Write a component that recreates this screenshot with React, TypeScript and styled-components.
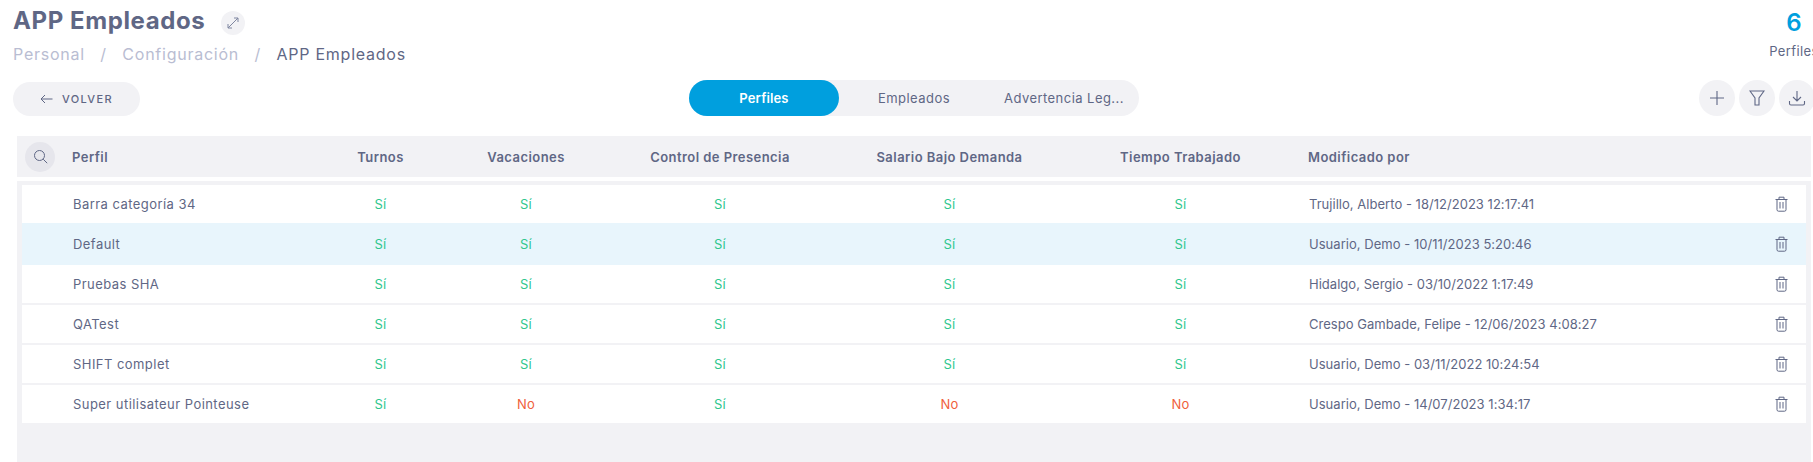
import React from "react";
import styled, { createGlobalStyle } from "styled-components";

const Global = createGlobalStyle`
  html, body { margin: 0; padding: 0; background: #fff; height: 100%; overflow: hidden; }
  #root { width: 1813px; height: 462px; overflow: hidden; }
  * { box-sizing: border-box; }
  body { font-family: Inter, "Open Sans", "Liberation Sans", sans-serif; color: #5f6785; }
`;

const Page = styled.div`
  width: 1819px;
  height: 462px;
  display: flex;
  flex-direction: column;
`;

const Header = styled.header`
  height: 80px;
  display: flex;
  justify-content: space-between;
`;

const TitleBlock = styled.div`
  padding: 8px 0 0 13px;
`;

const TitleRow = styled.div`
  display: flex;
  align-items: center;
  height: 26px;
  gap: 16px;
`;

const Title = styled.h1`
  margin: 0;
  font-size: 24px;
  line-height: 26px;
  font-weight: 700;
  color: #5f6785;
  letter-spacing: 0.6px;
`;

const ExpandButton = styled.span`
  width: 24px;
  height: 24px;
  border-radius: 50%;
  background: #f2f2f5;
  display: flex;
  align-items: center;
  justify-content: center;
  color: #7f86a0;
  margin-top: 3px;
`;

const Crumbs = styled.nav`
  margin-top: 9px;
  display: flex;
  font-size: 16px;
  line-height: 22px;
  letter-spacing: 0.75px;
  color: #b9bdd2;
`;

const CrumbSep = styled.span`
  margin: 0 15.5px;
`;

const CrumbCurrent = styled.span`
  color: #5f6785;
`;

const Stat = styled.div`
  width: 50px;
  padding-top: 10px;
  text-align: center;
`;

const StatValue = styled.div`
  font-size: 24px;
  line-height: 26px;
  font-weight: 600;
  color: #009fde;
`;

const StatLabel = styled.div`
  margin-top: 6px;
  font-size: 13px;
  line-height: 18px;
  letter-spacing: 0.4px;
  color: #5f6785;
  white-space: nowrap;
`;

const Toolbar = styled.div`
  height: 36px;
  display: grid;
  grid-template-columns: 676px 450px 1fr;
  align-items: center;
  padding-left: 13px;
  padding-right: 4px;
`;

const BackButton = styled.button`
  width: 127px;
  height: 34px;
  margin-top: 2px;
  border: 0;
  border-radius: 17px;
  background: #f2f2f5;
  color: #5f6785;
  font: 500 11px Inter, sans-serif;
  letter-spacing: 1.4px;
  display: flex;
  align-items: center;
  justify-content: center;
  gap: 9px;
  padding: 0;
`;

const Tabs = styled.div`
  display: grid;
  grid-template-columns: repeat(3, 150px);
  height: 36px;
  background: #f2f2f5;
  border-radius: 18px;
`;

const Tab = styled.div<{ $active?: boolean }>`
  border-radius: 18px;
  display: flex;
  align-items: center;
  justify-content: center;
  font-size: 13px;
  letter-spacing: ${(p) => (p.$active ? 0.15 : 0.45)}px;
  font-weight: ${(p) => (p.$active ? 600 : 400)};
  color: ${(p) => (p.$active ? "#fff" : "#5f6785")};
  background: ${(p) => (p.$active ? "#009fde" : "transparent")};
  white-space: nowrap;
`;

const Actions = styled.div`
  display: flex;
  justify-content: flex-end;
  gap: 4px;
`;

const RoundButton = styled.span`
  width: 36px;
  height: 36px;
  border-radius: 50%;
  background: #f2f2f5;
  display: flex;
  align-items: center;
  justify-content: center;
  color: #5f6785;
`;

const Panel = styled.section`
  flex: 1;
  margin: 20px 8px 0 17px;
  display: flex;
  flex-direction: column;
`;

const dataColumns = "231px 155px 136px 252px 207px 255px 1fr 50px";

const HeadRow = styled.div`
  height: 41px;
  background: #f2f2f5;
  display: grid;
  grid-template-columns: 55px ${dataColumns};
  align-items: center;
  font-size: 13px;
  font-weight: 600;
  letter-spacing: 0.45px;
  color: #5f6785;
`;

const SearchCell = styled.span`
  width: 30px;
  height: 30px;
  margin-left: 8px;
  border-radius: 50%;
  background: #e6e6ec;
  display: flex;
  align-items: center;
  justify-content: center;
  color: #5f6785;
`;

const Body = styled.div`
  flex: 1;
  margin-top: 4px;
  background: #f2f2f5;
  padding: 4px 5px 0;
  display: flex;
  flex-direction: column;
`;

const Row = styled.div<{ $selected?: boolean; $h: number }>`
  height: ${(p) => p.$h}px;
  flex: none;
  background: ${(p) => (p.$selected ? "#e8f5fc" : "#fff")};
  display: grid;
  grid-template-columns: 50px ${dataColumns};
  align-items: center;
  font-size: 13px;
  color: #5f6785;
`;

const Center = styled.span`
  text-align: center;
`;

const Left = styled.span`
  white-space: nowrap;
`;

const NameCell = styled(Left)`
  padding-left: 1px;
  letter-spacing: 0.45px;
`;

const ByCell = styled(Left)`
  padding-left: 1px;
  letter-spacing: 0.03px;
`;

const Value = styled.span<{ $yes: boolean }>`
  text-align: center;
  letter-spacing: 0.3px;
  color: ${(p) => (p.$yes ? "#2fc78e" : "#f0603c")};
`;

const Trash = styled.span`
  display: flex;
  justify-content: center;
  color: #5f6785;
`;

const Spacer = styled.span``;

const Divider = styled.div`
  height: 2px;
  flex: none;
`;

const rows = [
  { name: "Barra categoría 34", v: [1, 1, 1, 1, 1], by: "Trujillo, Alberto - 18/12/2023 12:17:41", h: 38 },
  { name: "Default", v: [1, 1, 1, 1, 1], by: "Usuario, Demo - 10/11/2023 5:20:46", h: 42, selected: true },
  { name: "Pruebas SHA", v: [1, 1, 1, 1, 1], by: "Hidalgo, Sergio - 03/10/2022 1:17:49", h: 38 },
  { name: "QATest", v: [1, 1, 1, 1, 1], by: "Crespo Gambade, Felipe - 12/06/2023 4:08:27", h: 38 },
  { name: "SHIFT complet", v: [1, 1, 1, 1, 1], by: "Usuario, Demo - 03/11/2022 10:24:54", h: 38 },
  { name: "Super utilisateur Pointeuse", v: [1, 0, 1, 0, 0], by: "Usuario, Demo - 14/07/2023 1:34:17", h: 38 },
];

const heads = ["Turnos", "Vacaciones", "Control de Presencia", "Salario Bajo Demanda", "Tiempo Trabajado"];

const TrashIcon = () => (
  <svg width="13" height="16" viewBox="0 0 13 16" fill="none" stroke="currentColor" strokeWidth="1">
    <path d="M0.5 3.5h12M4 3V1.2h5V3M2 3.5v10.2a1.5 1.5 0 0 0 1.5 1.5h6a1.5 1.5 0 0 0 1.5-1.5V3.5M5 6v6.5M8 6v6.5" />
  </svg>
);

export default function App() {
  return (
    <Page>
      <Global />
      <Header>
        <TitleBlock>
          <TitleRow>
            <Title>APP Empleados</Title>
            <ExpandButton>
              <svg width="12" height="12" viewBox="0 0 12 12" fill="none" stroke="currentColor" strokeWidth="1">
                <path d="M1 11l10-10M7 1h4v4M5 11H1V7" />
              </svg>
            </ExpandButton>
          </TitleRow>
          <Crumbs>
            <span>Personal</span>
            <CrumbSep>/</CrumbSep>
            <span>Configuración</span>
            <CrumbSep>/</CrumbSep>
            <CrumbCurrent>APP Empleados</CrumbCurrent>
          </Crumbs>
        </TitleBlock>
        <Stat>
          <StatValue>6</StatValue>
          <StatLabel>Perfiles</StatLabel>
        </Stat>
      </Header>
      <Toolbar>
        <BackButton>
          <svg width="13" height="10" viewBox="0 0 13 10" fill="none" stroke="currentColor" strokeWidth="1">
            <path d="M12.5 5H1M5 1L1 5l4 4" />
          </svg>
          VOLVER
        </BackButton>
        <Tabs>
          <Tab $active>Perfiles</Tab>
          <Tab>Empleados</Tab>
          <Tab>Advertencia Leg...</Tab>
        </Tabs>
        <Actions>
          <RoundButton>
            <svg width="16" height="16" viewBox="0 0 16 16" fill="none" stroke="currentColor" strokeWidth="1.1">
              <path d="M8 1v14M1 8h14" />
            </svg>
          </RoundButton>
          <RoundButton>
            <svg width="16" height="18" viewBox="0 0 16 18" fill="none" stroke="currentColor" strokeWidth="1.1">
              <path d="M1 2h14L10 9v7H6V9z" />
            </svg>
          </RoundButton>
          <RoundButton>
            <svg width="18" height="18" viewBox="0 0 18 18" fill="none" stroke="currentColor" strokeWidth="1.1">
              <path d="M9 2v10M5 8l4 4 4-4M1.5 12v2.5a1.5 1.5 0 0 0 1.5 1.5h12a1.5 1.5 0 0 0 1.5-1.5V12" />
            </svg>
          </RoundButton>
        </Actions>
      </Toolbar>
      <Panel>
        <HeadRow>
          <SearchCell>
            <svg width="15" height="15" viewBox="0 0 15 15" fill="none" stroke="currentColor" strokeWidth="1">
              <circle cx="6.5" cy="6.5" r="5" />
              <path d="M10.2 10.2l4 4" />
            </svg>
          </SearchCell>
          <Left>Perfil</Left>
          {heads.map((h) => (
            <Center key={h}>{h}</Center>
          ))}
          <Left>Modificado por</Left>
          <Spacer />
        </HeadRow>
        <Body>
          {rows.map((r, i) => (
            <React.Fragment key={r.name}>
              <Row $h={r.h} $selected={r.selected}>
                <Spacer />
                <NameCell>{r.name}</NameCell>
                {r.v.map((y, j) => (
                  <Value key={j} $yes={!!y}>
                    {y ? "Sí" : "No"}
                  </Value>
                ))}
                <ByCell>{r.by}</ByCell>
                <Trash>
                  <TrashIcon />
                </Trash>
              </Row>
              {i > 1 && i < 5 ? <Divider /> : null}
            </React.Fragment>
          ))}
        </Body>
      </Panel>
    </Page>
  );
}
